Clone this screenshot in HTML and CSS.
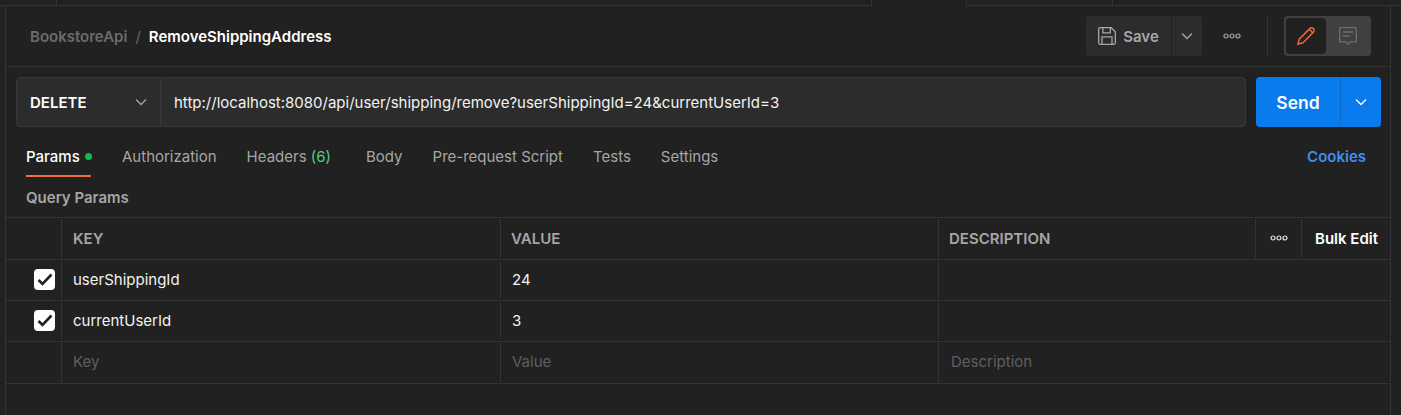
FILE: index.html
```html
<!DOCTYPE html>
<html lang="en">

<head>
    <meta charset="UTF-8">
    <title>RemoveShippingAddress</title>
    <link rel="stylesheet" href="styles.css">
</head>

<body>
    <div class="top-strip">
        <div class="strip-tab strip-a"></div>
        <div class="strip-tab strip-b"></div>
        <div class="strip-tab strip-c"></div>
        <div class="strip-tab strip-d"></div>
    </div>

    <div class="pane">
        <header class="title-bar">
            <div class="crumbs">
                <span class="crumb-parent">BookstoreApi</span>
                <span class="crumb-sep">/</span>
                <span class="crumb-name">RemoveShippingAddress</span>
            </div>
            <div class="title-actions">
                <div class="save-group">
                    <button class="save-btn">
                        <svg width="18" height="18" viewBox="0 0 18 18" fill="none" stroke="#a6a6a6" stroke-width="1.3">
                            <path d="M2 .7h11.300l4 4V15.800a1.500 1.500 0 0 1-1.500 1.500H2A1.500 1.500 0 0 1 .7 15.800V2A1.300 1.300 0 0 1 2 .7z" />
                            <path d="M4.800 .9v5h7.500v-5M4 17.200v-7.300h10v7.300" />
                        </svg>
                        Save
                    </button>
                    <button class="save-arrow">
                        <svg width="12" height="8" viewBox="0 0 12 8" fill="none" stroke="#a6a6a6" stroke-width="1.3">
                            <path d="M1 1.500l5 5 5-5" />
                        </svg>
                    </button>
                </div>
                <svg class="title-dots" width="18" height="6" viewBox="0 0 18 6" fill="none" stroke="#a6a6a6" stroke-width="1.2">
                    <circle cx="3" cy="3" r="2" />
                    <circle cx="9" cy="3" r="2" />
                    <circle cx="15" cy="3" r="2" />
                </svg>
                <div class="v-rule"></div>
                <div class="mode-switch">
                    <div class="mode mode-on">
                        <svg width="18" height="18" viewBox="0 0 18 18" fill="none" stroke="#e8693c" stroke-width="1.5">
                            <path d="M.9 17.100l1.300-5L12.700 1.600a2.300 2.300 0 0 1 3.700 3.700L5.900 15.800z" />
                            <path d="M12.200 2.300l3.500 3.500" />
                        </svg>
                    </div>
                    <div class="mode">
                        <svg width="18" height="18" viewBox="0 0 18 18" fill="none" stroke="#6e6e6e" stroke-width="1.3">
                            <path d="M1.500 .7h15a.8 .8 0 0 1 .8 .8v12.500a.8 .8 0 0 1-.8 .8h-5.500L9 17.200l-2-2.400H1.500a.8 .8 0 0 1-.8-.8V1.500a.8 .8 0 0 1 .8-.8z" />
                            <path d="M4 5h10M4 9h6.500" />
                        </svg>
                    </div>
                </div>
            </div>
        </header>

        <div class="request-bar">
            <div class="url-box">
                <div class="method">
                    DELETE
                    <svg width="12" height="8" viewBox="0 0 12 8" fill="none" stroke="#a6a6a6" stroke-width="1.3">
                        <path d="M1 1.500l5 5 5-5" />
                    </svg>
                </div>
                <div class="url">http://localhost:8080/api/user/shipping/remove?userShippingId=24&amp;currentUserId=3</div>
            </div>
            <div class="send">
                <div class="send-label">Send</div>
                <div class="send-arrow">
                    <svg width="12" height="8" viewBox="0 0 12 8" fill="none" stroke="#fff" stroke-width="1.3">
                        <path d="M1 1.500l5 5 5-5" />
                    </svg>
                </div>
            </div>
        </div>

        <nav class="tabs">
            <div class="tab tab-on">Params<span class="green-dot"></span></div>
            <div class="tab">Authorization</div>
            <div class="tab tab-headers">Headers <span class="count">(6)</span></div>
            <div class="tab">Body</div>
            <div class="tab">Pre-request Script</div>
            <div class="tab">Tests</div>
            <div class="tab">Settings</div>
            <div class="cookies">Cookies</div>
        </nav>

        <div class="section-title">Query Params</div>

        <div class="params">
            <div class="row head-row">
                <div class="cell"></div>
                <div class="cell cell-key">KEY</div>
                <div class="cell">VALUE</div>
                <div class="cell">DESCRIPTION</div>
                <div class="cell cell-dots">
                    <svg width="18" height="6" viewBox="0 0 18 6" fill="none" stroke="#e6e6e6" stroke-width="1.2">
                        <circle cx="3" cy="3" r="2" />
                        <circle cx="9" cy="3" r="2" />
                        <circle cx="15" cy="3" r="2" />
                    </svg>
                </div>
                <div class="cell cell-bulk">Bulk Edit</div>
            </div>
            <div class="row body-row">
                <div class="cell cell-check"><span class="check"><svg width="16" height="13" viewBox="0 0 16 13" fill="none" stroke="#212121" stroke-width="2.6"><path d="M1.500 7l4 4 9-9.500" /></svg></span></div>
                <div class="cell">userShippingId</div>
                <div class="cell">24</div>
                <div class="cell cell-wide"></div>
            </div>
            <div class="row body-row">
                <div class="cell cell-check"><span class="check"><svg width="16" height="13" viewBox="0 0 16 13" fill="none" stroke="#212121" stroke-width="2.6"><path d="M1.500 7l4 4 9-9.500" /></svg></span></div>
                <div class="cell">currentUserId</div>
                <div class="cell">3</div>
                <div class="cell cell-wide"></div>
            </div>
            <div class="row body-row empty-row">
                <div class="cell cell-check"></div>
                <div class="cell">Key</div>
                <div class="cell">Value</div>
                <div class="cell cell-wide">Description</div>
            </div>
        </div>
    </div>
</body>

</html>
```

FILE: styles.css
```css
* {
    margin: 0;
    padding: 0;
    box-sizing: border-box;
}

html,
body {
    height: 415px;
    overflow: hidden;
}

body {
    font-family: 'Inter', 'Open Sans', sans-serif;
    background-color: #212121;
    color: #f2f2f2;
    font-size: 15px;
}

button {
    font-family: inherit;
    border: none;
    color: inherit;
}

/* tab strip cut off at the top */
.top-strip {
    display: flex;
    height: 6px;
    border-bottom: 1px solid #333;
}

.strip-tab {
    border-right: 1px solid #333;
}

.strip-a {
    width: 57px;
}

.strip-b {
    width: 815px;
}

/* the open tab has no line under it */
.strip-c {
    width: 95px;
    height: 6px;
    background-color: #212121;
}

.strip-d {
    width: 146px;
}

.pane {
    width: 1386px;
    height: 409px;
    margin-left: 5px;
    border-left: 1px solid #333;
    border-right: 1px solid #333;
}

/* title row */
.title-bar {
    height: 61px;
    display: flex;
    align-items: center;
    justify-content: space-between;
    border-bottom: 1px solid #333;
    padding: 0 19px 0 24px;
}

.crumbs {
    display: flex;
    align-items: center;
}

.crumb-parent {
    color: #6b6b6b;
    font-weight: 600;
}

.crumb-sep {
    color: #6b6b6b;
    margin: 0 8px;
}

.crumb-name {
    color: #fff;
    font-weight: 600;
}

.title-actions {
    display: flex;
    align-items: center;
}

.save-group {
    display: flex;
    height: 40px;
}

.save-btn {
    width: 85px;
    display: flex;
    align-items: center;
    justify-content: center;
    gap: 7px;
    background-color: #2c2c2c;
    color: #a6a6a6;
    font-size: 15px;
    font-weight: 600;
    border-radius: 4px 0 0 4px;
}

.save-arrow {
    width: 30px;
    margin-left: 1px;
    background-color: #2c2c2c;
    border-radius: 0 4px 4px 0;
    display: flex;
    align-items: center;
    justify-content: center;
}

.title-dots {
    margin: 0 26px 0 21px;
}

.v-rule {
    width: 1px;
    height: 40px;
    background-color: #333;
    margin-right: 16px;
}

.mode-switch {
    display: flex;
    width: 87px;
    height: 40px;
    padding: 2px;
    background-color: #404040;
    border-radius: 4px;
}

.mode {
    width: 40px;
    display: flex;
    align-items: center;
    justify-content: center;
    border-radius: 4px;
}

.mode + .mode {
    width: 43px;
}

.mode-on {
    background-color: #212121;
}

/* method + url */
.request-bar {
    display: flex;
    gap: 10px;
    padding: 10px 9px 0 10px;
}

.url-box {
    flex: 1;
    height: 50px;
    display: flex;
    background-color: #2c2c2c;
    border: 1px solid #383838;
    border-radius: 4px;
}

.method {
    width: 144px;
    display: flex;
    align-items: center;
    justify-content: space-between;
    padding: 0 13px;
    border-right: 1px solid #383838;
    font-weight: 600;
    color: #fff;
}

.url {
    display: flex;
    align-items: center;
    padding-left: 13px;
    color: #f2f2f2;
}

.send {
    width: 125px;
    height: 50px;
    display: flex;
    background-color: #097bed;
    border-radius: 4px;
    color: #fff;
}

.send-label {
    flex: 1;
    display: flex;
    align-items: center;
    justify-content: center;
    font-size: 17.5px;
    font-weight: 600;
    border-right: 1px solid #0a6cce;
}

.send-arrow {
    width: 40px;
    display: flex;
    align-items: center;
    justify-content: center;
}

/* request tabs */
.tabs {
    display: flex;
    gap: 30px;
    height: 50px;
    padding: 0 24px 0 20px;
    align-items: flex-start;
}

.tab {
    padding-top: 20px;
    height: 50px;
    color: #a6a6a6;
    line-height: 19px;
    white-space: nowrap;
}

.tab-on {
    color: #fff;
    font-weight: 500;
    border-bottom: 2px solid #f26b3a;
    display: flex;
    align-items: flex-start;
    width: 65px;
    margin-right: 1px;
}

.tab-headers {
    margin-right: 5px;
}

.green-dot {
    width: 7px;
    height: 7px;
    margin: 6px 0 0 5px;
    background-color: #0cbb52;
    border-radius: 50%;
    flex-shrink: 0;
}

.count {
    color: #4fd07f;
}

.cookies {
    margin-left: auto;
    padding-top: 20px;
    color: #3d8ff0;
    font-weight: 600;
    line-height: 19px;
}

.section-title {
    height: 40px;
    padding: 12px 0 0 20px;
    color: #a6a6a6;
    font-weight: 600;
    line-height: 17px;
}

/* params table */
.params {
    border-top: 1px solid #333;
}

.row {
    display: grid;
    grid-template-columns: 56px 439px 438px 317px 46px 1fr;
    border-bottom: 1px solid #333;
}

.head-row {
    height: 42px;
    color: #a6a6a6;
    font-weight: 600;
}

.body-row {
    height: 41px;
    color: #f2f2f2;
}

.empty-row {
    height: 42px;
    color: #5f5f5f;
}

.cell {
    display: flex;
    align-items: center;
    padding: 0 0 1px 11px;
    margin: 1px 0;
    border-right: 1px solid #333;
}

.head-row .cell {
    padding-left: 10px;
}

.head-row .cell-key {
    padding-left: 11px;
}

.empty-row .cell {
    padding-bottom: 3px;
}

.cell-wide {
    grid-column: 4 / 7;
    padding-left: 12px;
    border-right: none;
}

.head-row .cell:last-child {
    border-right: none;
}

.head-row .cell-dots {
    padding-left: 14px;
}

.head-row .cell-bulk {
    padding-left: 13px;
    color: #fff;
    white-space: nowrap;
}

.cell-check {
    padding-left: 28px;
}

.check {
    width: 21px;
    height: 21px;
    display: flex;
    align-items: center;
    justify-content: center;
    background-color: #fff;
    border-radius: 4px;
}
```
